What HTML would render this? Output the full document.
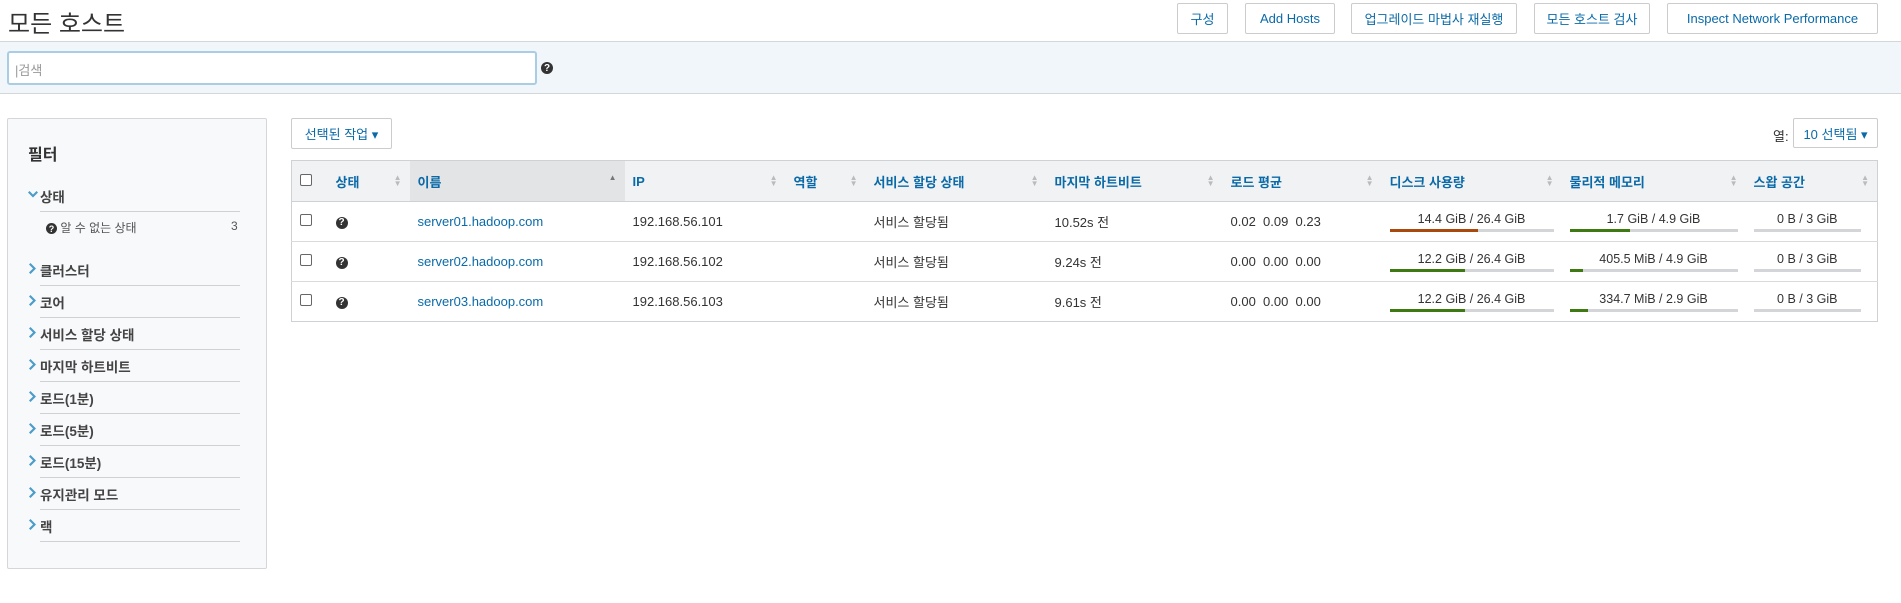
<!DOCTYPE html>
<html><head><meta charset="utf-8"><style>
*{box-sizing:border-box;margin:0;padding:0}
body{width:1901px;height:603px;background:#fff;font-family:"Liberation Sans","Noto Sans CJK KR",sans-serif;font-size:13px;color:#333;position:relative;overflow:hidden}
.abs{position:absolute}
h1{position:absolute;left:8px;top:4px;font-size:24px;font-weight:normal;color:#333}
.btn{position:absolute;top:3px;height:31px;border:1px solid #ccc;border-radius:2px;background:#fff;color:#0a6aa8;font-size:13px;display:flex;align-items:center;justify-content:center}
.band{position:absolute;left:0;top:41px;width:1901px;height:53px;background:#f0f6fa;border-top:1px solid #d3d7da;border-bottom:1px solid #d3d7da}
.search{position:absolute;left:7px;top:51px;width:530px;height:34px;background:#fff;border:2px solid #a9cde3;border-radius:3px;color:#999;font-size:13px;padding:7px 6px}
.q{display:inline-flex;align-items:center;justify-content:center;width:12px;height:12px;border-radius:50%;background:#333;color:#fff;font-size:10px;font-weight:bold;vertical-align:middle}
.panel{position:absolute;left:7px;top:118px;width:260px;height:451px;background:#f8f9fb;border:1px solid #d4d6d9;border-radius:2px}
.fi{position:absolute;left:40px;width:200px;height:32px;padding-top:6px;border-bottom:1px solid #cfd2d5;font-size:13.5px;color:#444;font-weight:bold}
.fi svg{position:absolute;left:-11px;top:9px}
table{position:absolute;left:291px;top:160px;width:1587px;border-collapse:collapse;border:1px solid #cfd2d5}
th{height:41px;background:#f1f2f4;color:#0a6aa8;text-align:left;font-weight:bold;font-size:13px;padding:0 8px;border-bottom:1px solid #cfd2d5;position:relative}
th .s{position:absolute;right:8px;top:14px;font-size:8px;color:#bbb;line-height:6px}
td{height:40px;padding:0 8px;border-bottom:1px solid #d8dadc;font-size:13px}
tr:last-child td{border-bottom:none}
a{color:#0a6aa8;text-decoration:none}
.cb{display:inline-block;width:12px;height:12px;border:1px solid #666;border-radius:2px;background:#fff}
.bar{position:relative;text-align:center;font-size:12.5px}
.bar i{display:block;height:3px;background:#d3d5d8;margin-top:3px;position:relative}
.bar i b{position:absolute;left:0;top:0;height:3px}
</style></head><body>
<h1>모든 호스트</h1>
<div class="btn" style="left:1177px;width:51px">구성</div>
<div class="btn" style="left:1245px;width:90px">Add Hosts</div>
<div class="btn" style="left:1351px;width:166px">업그레이드 마법사 재실행</div>
<div class="btn" style="left:1534px;width:116px">모든 호스트 검사</div>
<div class="btn" style="left:1667px;width:211px">Inspect Network Performance</div>
<div class="band"></div>
<div class="search">|검색</div>
<span class="q abs" style="left:541px;top:62px">?</span>

<div class="panel">
<div class="abs" style="left:20px;top:22px;font-size:16px;font-weight:bold;color:#333">필터</div>
</div>
<div class="fi" style="top:180px"><svg width="10" height="8" viewBox="0 0 10 8" style="left:-12px;top:11px"><path d="M0 1.5L1.5 0L5 3.5L8.5 0L10 1.5L5 6.5Z" fill="#4a9cc9"/></svg>상태</div>
<div class="abs" style="left:46px;top:219px;color:#555;font-size:12px"><span class="q" style="width:11px;height:11px;font-size:9px">?</span> 알 수 없는 상태</div>
<div class="abs" style="left:231px;top:219px;color:#555;font-size:12px">3</div>
<div class="fi" style="top:254px"><svg width="8" height="11" viewBox="0 0 8 11"><path d="M1.5 0L0 1.5L4 5.5L0 9.5L1.5 11L7 5.5Z" fill="#4a9cc9"/></svg>클러스터</div>
<div class="fi" style="top:286px"><svg width="8" height="11" viewBox="0 0 8 11"><path d="M1.5 0L0 1.5L4 5.5L0 9.5L1.5 11L7 5.5Z" fill="#4a9cc9"/></svg>코어</div>
<div class="fi" style="top:318px"><svg width="8" height="11" viewBox="0 0 8 11"><path d="M1.5 0L0 1.5L4 5.5L0 9.5L1.5 11L7 5.5Z" fill="#4a9cc9"/></svg>서비스 할당 상태</div>
<div class="fi" style="top:350px"><svg width="8" height="11" viewBox="0 0 8 11"><path d="M1.5 0L0 1.5L4 5.5L0 9.5L1.5 11L7 5.5Z" fill="#4a9cc9"/></svg>마지막 하트비트</div>
<div class="fi" style="top:382px"><svg width="8" height="11" viewBox="0 0 8 11"><path d="M1.5 0L0 1.5L4 5.5L0 9.5L1.5 11L7 5.5Z" fill="#4a9cc9"/></svg>로드(1분)</div>
<div class="fi" style="top:414px"><svg width="8" height="11" viewBox="0 0 8 11"><path d="M1.5 0L0 1.5L4 5.5L0 9.5L1.5 11L7 5.5Z" fill="#4a9cc9"/></svg>로드(5분)</div>
<div class="fi" style="top:446px"><svg width="8" height="11" viewBox="0 0 8 11"><path d="M1.5 0L0 1.5L4 5.5L0 9.5L1.5 11L7 5.5Z" fill="#4a9cc9"/></svg>로드(15분)</div>
<div class="fi" style="top:478px"><svg width="8" height="11" viewBox="0 0 8 11"><path d="M1.5 0L0 1.5L4 5.5L0 9.5L1.5 11L7 5.5Z" fill="#4a9cc9"/></svg>유지관리 모드</div>
<div class="fi" style="top:510px"><svg width="8" height="11" viewBox="0 0 8 11"><path d="M1.5 0L0 1.5L4 5.5L0 9.5L1.5 11L7 5.5Z" fill="#4a9cc9"/></svg>랙</div>

<div class="btn" style="left:291px;top:118px;width:101px;height:31px">선택된 작업 ▾</div>
<div class="abs" style="left:1773px;top:126px;color:#333">열:</div>
<div class="btn" style="left:1793px;top:118px;width:85px;height:30px">10 선택됨 ▾</div>

<table>
<colgroup><col style="width:36px"><col style="width:82px"><col style="width:215px"><col style="width:161px"><col style="width:80px"><col style="width:181px"><col style="width:176px"><col style="width:159px"><col style="width:180px"><col style="width:184px"><col></colgroup>
<tr><th><span class="cb"></span></th><th>상태<span class="s">▲<br>▼</span></th><th style="background:#e3e4e6">이름<span class="s" style="color:#777">▲<br><span style="color:#e3e4e6">▼</span></span></th><th>IP<span class="s">▲<br>▼</span></th><th>역할<span class="s">▲<br>▼</span></th><th>서비스 할당 상태<span class="s">▲<br>▼</span></th><th>마지막 하트비트<span class="s">▲<br>▼</span></th><th>로드 평균<span class="s">▲<br>▼</span></th><th>디스크 사용량<span class="s">▲<br>▼</span></th><th>물리적 메모리<span class="s">▲<br>▼</span></th><th>스왑 공간<span class="s">▲<br>▼</span></th></tr>
<tr><td><span class="cb"></span></td><td><span class="q">?</span></td><td><a>server01.hadoop.com</a></td><td>192.168.56.101</td><td></td><td>서비스 할당됨</td><td>10.52s 전</td><td>0.02&nbsp; 0.09&nbsp; 0.23</td>
<td><div class="bar">14.4 GiB / 26.4 GiB<i><b style="width:54%;background:#a9490b"></b></i></div></td>
<td><div class="bar">1.7 GiB / 4.9 GiB<i><b style="width:36%;background:#3d7a12"></b></i></div></td>
<td><div class="bar" style="margin-right:8px">0 B / 3 GiB<i></i></div></td></tr>
<tr><td><span class="cb"></span></td><td><span class="q">?</span></td><td><a>server02.hadoop.com</a></td><td>192.168.56.102</td><td></td><td>서비스 할당됨</td><td>9.24s 전</td><td>0.00&nbsp; 0.00&nbsp; 0.00</td>
<td><div class="bar">12.2 GiB / 26.4 GiB<i><b style="width:46%;background:#3d7a12"></b></i></div></td>
<td><div class="bar">405.5 MiB / 4.9 GiB<i><b style="width:8%;background:#3d7a12"></b></i></div></td>
<td><div class="bar" style="margin-right:8px">0 B / 3 GiB<i></i></div></td></tr>
<tr><td><span class="cb"></span></td><td><span class="q">?</span></td><td><a>server03.hadoop.com</a></td><td>192.168.56.103</td><td></td><td>서비스 할당됨</td><td>9.61s 전</td><td>0.00&nbsp; 0.00&nbsp; 0.00</td>
<td><div class="bar">12.2 GiB / 26.4 GiB<i><b style="width:46%;background:#3d7a12"></b></i></div></td>
<td><div class="bar">334.7 MiB / 2.9 GiB<i><b style="width:11%;background:#3d7a12"></b></i></div></td>
<td><div class="bar" style="margin-right:8px">0 B / 3 GiB<i></i></div></td></tr>
</table>
</body></html>
